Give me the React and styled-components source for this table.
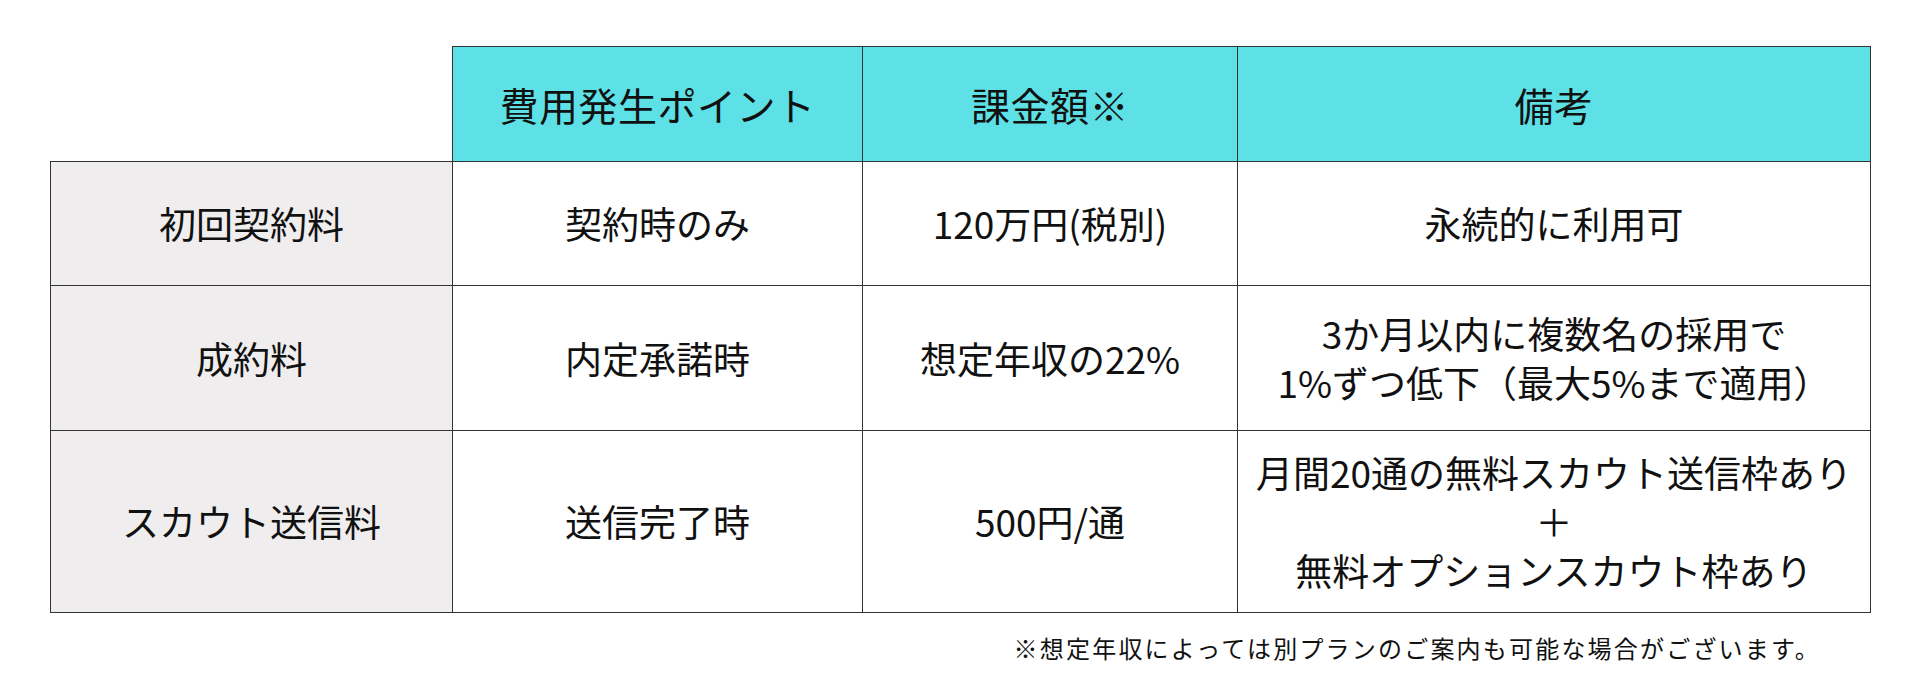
import React from 'react';
import styled, { createGlobalStyle } from 'styled-components';

const GlobalStyle = createGlobalStyle`
  body {
    margin: 0;
    background: #ffffff;
    font-family: "Noto Sans CJK JP", "Noto Sans", sans-serif;
    color: #111111;
  }
`;

// Outer wrapper with the page gutters
const Page = styled.div`
  padding: 46px 49px 0 50px;
`;

const PriceTable = styled.table`
  width: 100%;
  border-collapse: collapse;
  table-layout: fixed;
  font-size: 37px;
  line-height: 49px;
`;

const Row = styled.tr`
  height: ${props => props.h}px;
`;

// Empty top-left corner
const Corner = styled.th`
  border: none;
  background: transparent;
`;

const HeadCell = styled.th`
  background-color: #5de1e6;
  border: 1px solid #333;
  font-size: 39px;
  font-weight: 400;
  letter-spacing: 0.5px;
  text-align: center;
  vertical-align: middle;
`;

const RowLabel = styled.th`
  background-color: #efedee;
  border: 1px solid #333;
  font-weight: 400;
  text-align: center;
  vertical-align: middle;
`;

const Cell = styled.td`
  background-color: #ffffff;
  border: 1px solid #333;
  text-align: center;
  vertical-align: middle;
`;

const Note = styled.p`
  margin: 19px 0 0;
  padding-right: 50px;
  text-align: right;
  font-size: 24px;
  letter-spacing: 2.2px;
  line-height: 31px;
`;

const rows = [
  { label: '初回契約料', point: '契約時のみ', fee: '120万円(税別)', note: ['永続的に利用可'], h: 124 },
  { label: '成約料', point: '内定承諾時', fee: '想定年収の22%', note: ['3か月以内に複数名の採用で', '1%ずつ低下（最大5%まで適用）'], h: 145 },
  { label: 'スカウト送信料', point: '送信完了時', fee: '500円/通', note: ['月間20通の無料スカウト送信枠あり', '＋', '無料オプションスカウト枠あり'], h: 182 },
];

const App = () => {
  return (
    <>
      <GlobalStyle />
      <Page>
        <PriceTable>
          <colgroup>
            <col style={{ width: '402px' }} />
            <col style={{ width: '410px' }} />
            <col style={{ width: '375px' }} />
            <col />
          </colgroup>
          <thead>
            <Row h={115}>
              <Corner />
              <HeadCell>費用発生ポイント</HeadCell>
              <HeadCell>課金額※</HeadCell>
              <HeadCell>備考</HeadCell>
            </Row>
          </thead>
          <tbody>
            {rows.map(r => (
              <Row key={r.label} h={r.h}>
                <RowLabel>{r.label}</RowLabel>
                <Cell>{r.point}</Cell>
                <Cell>{r.fee}</Cell>
                <Cell>
                  {r.note.map((line, i) => (
                    <div key={i}>{line}</div>
                  ))}
                </Cell>
              </Row>
            ))}
          </tbody>
        </PriceTable>
        <Note>※想定年収によっては別プランのご案内も可能な場合がございます。</Note>
      </Page>
    </>
  );
};

export default App;
